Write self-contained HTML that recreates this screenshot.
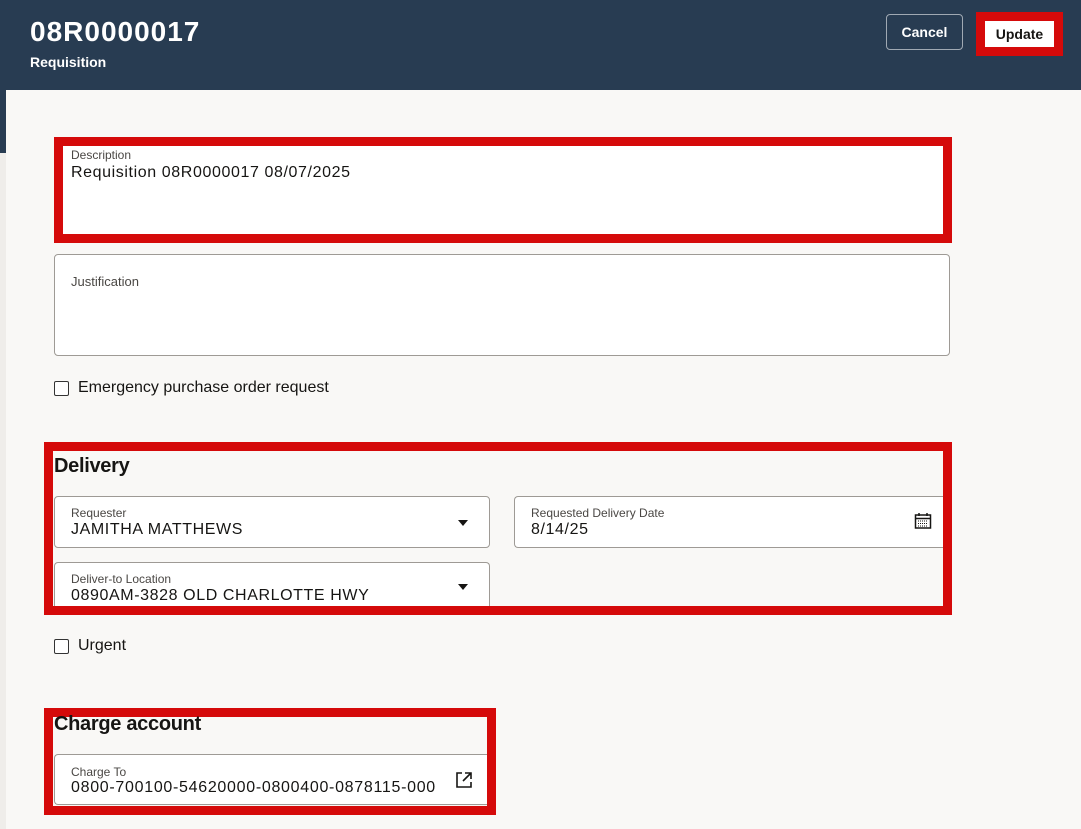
<!DOCTYPE html>
<html><head><style>
*{box-sizing:border-box;margin:0;padding:0}
body{width:1081px;height:829px;background:#f9f8f6;font-family:"Liberation Sans",sans-serif;position:relative;overflow:hidden;color:#161513}
.abs{position:absolute}
.red{border:9px solid #d50a0a}
.field{background:#fff;border:1px solid #9e9a95;border-radius:4px}
.lbl{font-size:12px;color:#4a4744;position:absolute;left:16px}
.val{font-size:16px;position:absolute;left:16px;white-space:nowrap;letter-spacing:0.6px}
.cb{width:15px;height:15px;border:1.5px solid #333;border-radius:2px;background:#fff}
.h{font-size:20px;font-weight:bold;letter-spacing:-0.3px}
.caret{position:absolute;width:0;height:0;border-left:5px solid transparent;border-right:5px solid transparent;border-top:6px solid #161513}
</style></head><body>
<div class="abs" style="left:0;top:0;width:1081px;height:90px;background:#283c52"></div>
<div class="abs" style="left:0;top:90px;width:6px;height:63px;background:#283c52"></div>
<div class="abs" style="left:0;top:153px;width:6px;height:676px;background:#efedea"></div>
<div class="abs" style="left:30px;top:16px;color:#fff;font-size:28px;font-weight:bold;letter-spacing:1px">08R0000017</div>
<div class="abs" style="left:30px;top:54px;color:#fff;font-size:14px;font-weight:bold">Requisition</div>
<div class="abs" style="left:886px;top:14px;width:77px;height:36px;border:1px solid #a0a9b3;border-radius:4px;color:#fff;font-size:14px;font-weight:bold;text-align:center;line-height:34px">Cancel</div>
<div class="abs red" style="left:976px;top:12px;width:87px;height:44px;background:#fff"><div style="font-size:14px;font-weight:bold;text-align:center;line-height:26px">Update</div></div>

<div class="abs red" style="left:54px;top:137px;width:898px;height:106px;background:#fff"></div>
<div class="abs" style="left:71px;top:148px;font-size:12px;color:#4a4744">Description</div>
<div class="abs" style="left:71px;top:164px;font-size:16px;letter-spacing:0.6px">Requisition 08R0000017 08/07/2025</div>

<div class="abs field" style="left:54px;top:254px;width:896px;height:102px"><div class="lbl" style="top:19px;font-size:13px">Justification</div></div>

<div class="abs cb" style="left:54px;top:381px"></div>
<div class="abs" style="left:78px;top:379px;font-size:16px">Emergency purchase order request</div>

<div class="abs red" style="left:44px;top:442px;width:908px;height:173px"></div>
<div class="abs h" style="left:54px;top:455px">Delivery</div>
<div class="abs field" style="left:54px;top:496px;width:436px;height:52px"><div class="lbl" style="top:9px">Requester</div><div class="val" style="top:24px">JAMITHA MATTHEWS</div><div class="caret" style="left:403px;top:23px"></div></div>
<div class="abs field" style="left:514px;top:496px;width:429px;height:52px;border-right:none;border-radius:4px 0 0 4px"><div class="lbl" style="top:9px">Requested Delivery Date</div><div class="val" style="top:24px">8/14/25</div>
<svg class="abs" style="left:399px;top:15px" width="18" height="18" viewBox="0 0 18 18"><rect x="1.5" y="3" width="15" height="13" fill="none" stroke="#161513" stroke-width="1.5"/><line x1="1.5" y1="6.5" x2="16.5" y2="6.5" stroke="#161513" stroke-width="1.5"/><line x1="5" y1="1" x2="5" y2="4" stroke="#161513" stroke-width="1.5"/><line x1="13" y1="1" x2="13" y2="4" stroke="#161513" stroke-width="1.5"/><path d="M4 9h10M4 11.5h10M4 14h10" stroke="#161513" stroke-width="1" stroke-dasharray="1 1"/></svg></div>
<div class="abs field" style="left:54px;top:562px;width:436px;height:44px;border-bottom:none;border-radius:4px 4px 0 0"><div class="lbl" style="top:9px">Deliver-to Location</div><div class="val" style="top:24px">0890AM-3828 OLD CHARLOTTE HWY</div><div class="caret" style="left:403px;top:21px"></div></div>

<div class="abs cb" style="left:54px;top:639px"></div>
<div class="abs" style="left:78px;top:637px;font-size:16px">Urgent</div>

<div class="abs red" style="left:44px;top:708px;width:452px;height:107px"></div>
<div class="abs h" style="left:54px;top:713px">Charge account</div>
<div class="abs field" style="left:54px;top:754px;width:433px;height:51px;border-right:none;border-radius:4px 0 0 4px"><div class="lbl" style="top:10px">Charge To</div><div class="val" style="top:24px;letter-spacing:0.7px">0800-700100-54620000-0800400-0878115-000</div>
<svg class="abs" style="left:400px;top:16px" width="18" height="18" viewBox="0 0 18 18"><path d="M7 2H2v14h14v-5" fill="none" stroke="#161513" stroke-width="1.6"/><path d="M10 2h6v6M16 2L8 10" fill="none" stroke="#161513" stroke-width="1.6"/></svg></div>
</body></html>
